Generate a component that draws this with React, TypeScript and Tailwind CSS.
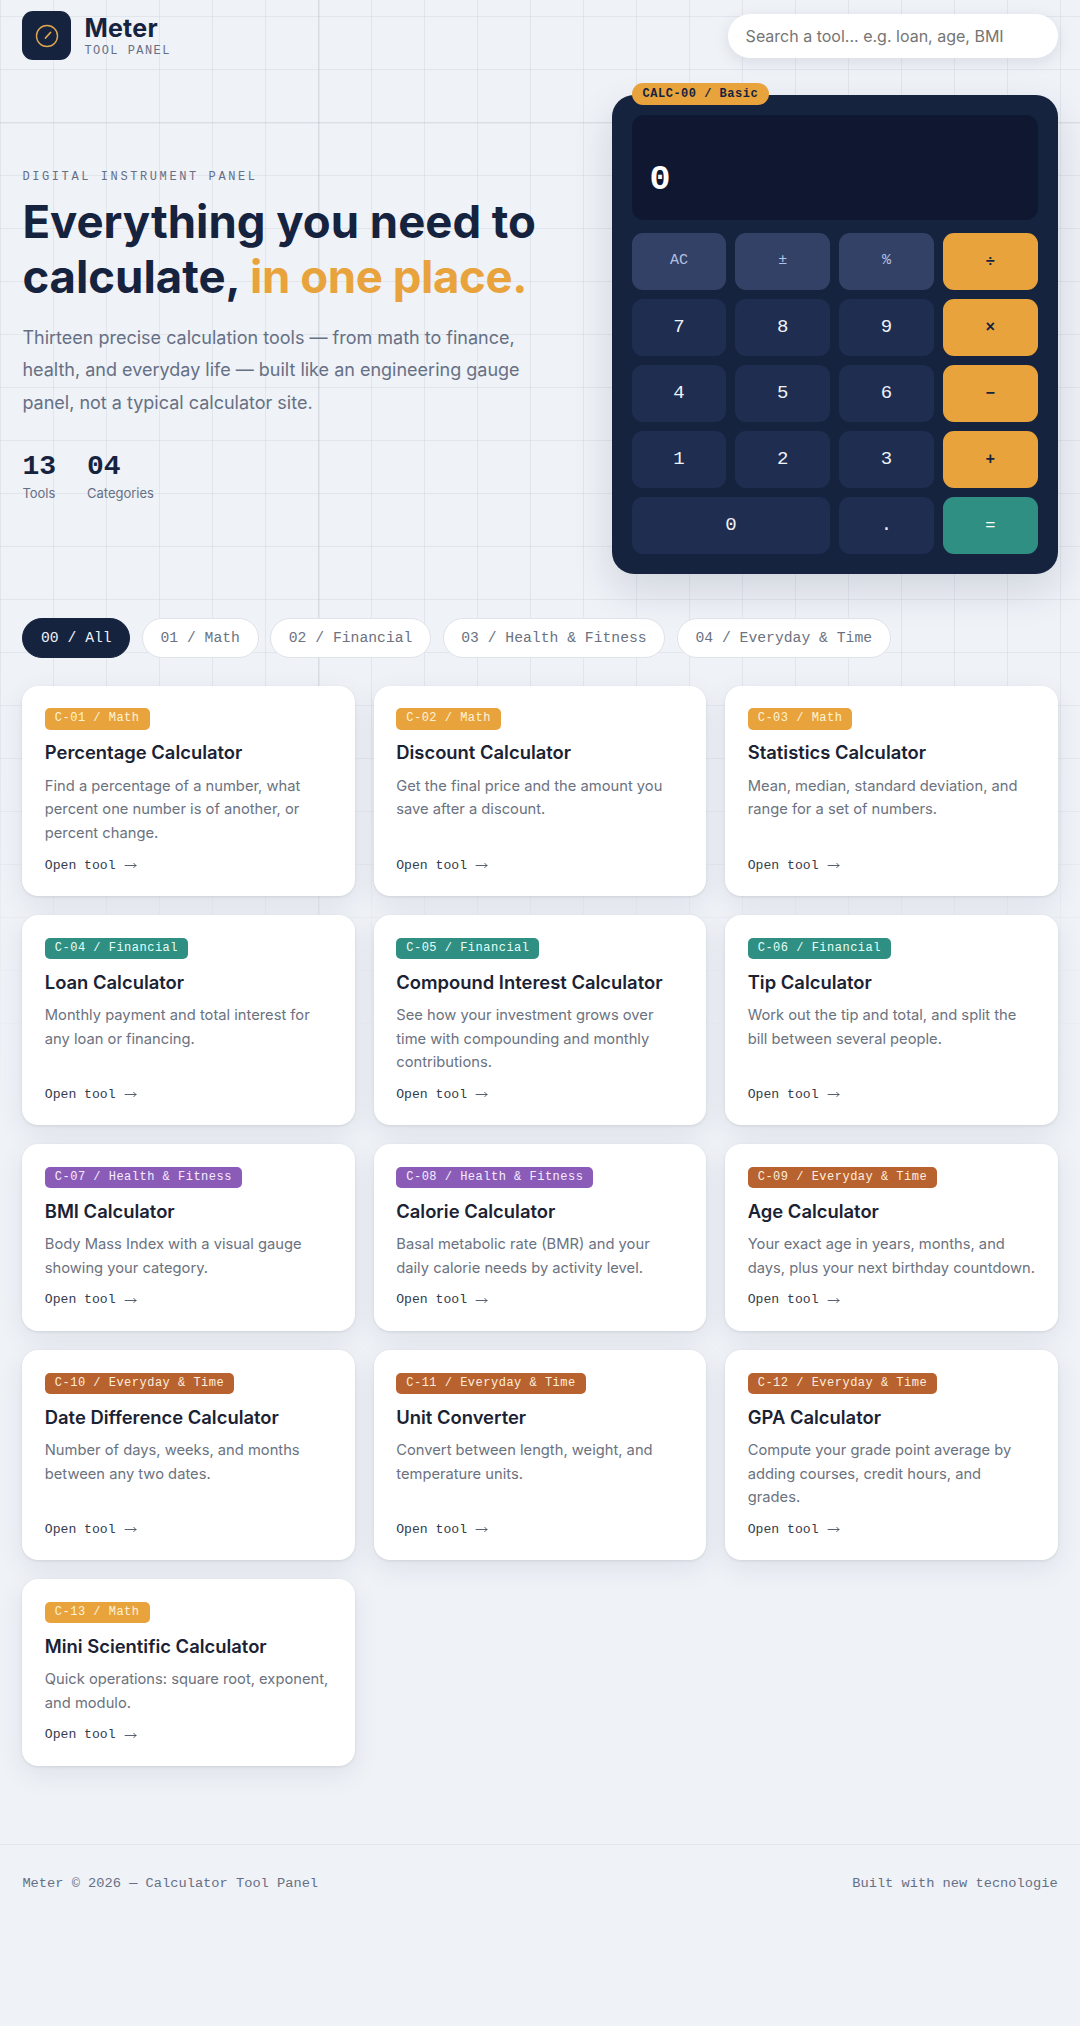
import React from 'react';
import { MoveRight } from 'lucide-react';

const mono = "font-['Liberation_Mono','DejaVu_Sans_Mono',monospace]";

type Tool = { id: string; cat: 'Math' | 'Financial' | 'Health & Fitness' | 'Everyday & Time'; name: string; desc: string };

const tools: Tool[] = [
  { id: 'C-01', cat: 'Math', name: 'Percentage Calculator', desc: 'Find a percentage of a number, what percent one number is of another, or percent change.' },
  { id: 'C-02', cat: 'Math', name: 'Discount Calculator', desc: 'Get the final price and the amount you save after a discount.' },
  { id: 'C-03', cat: 'Math', name: 'Statistics Calculator', desc: 'Mean, median, standard deviation, and range for a set of numbers.' },
  { id: 'C-04', cat: 'Financial', name: 'Loan Calculator', desc: 'Monthly payment and total interest for any loan or financing.' },
  { id: 'C-05', cat: 'Financial', name: 'Compound Interest Calculator', desc: 'See how your investment grows over time with compounding and monthly contributions.' },
  { id: 'C-06', cat: 'Financial', name: 'Tip Calculator', desc: 'Work out the tip and total, and split the bill between several people.' },
  { id: 'C-07', cat: 'Health & Fitness', name: 'BMI Calculator', desc: 'Body Mass Index with a visual gauge showing your category.' },
  { id: 'C-08', cat: 'Health & Fitness', name: 'Calorie Calculator', desc: 'Basal metabolic rate (BMR) and your daily calorie needs by activity level.' },
  { id: 'C-09', cat: 'Everyday & Time', name: 'Age Calculator', desc: 'Your exact age in years, months, and days, plus your next birthday countdown.' },
  { id: 'C-10', cat: 'Everyday & Time', name: 'Date Difference Calculator', desc: 'Number of days, weeks, and months between any two dates.' },
  { id: 'C-11', cat: 'Everyday & Time', name: 'Unit Converter', desc: 'Convert between length, weight, and temperature units.' },
  { id: 'C-12', cat: 'Everyday & Time', name: 'GPA Calculator', desc: 'Compute your grade point average by adding courses, credit hours, and grades.' },
  { id: 'C-13', cat: 'Math', name: 'Mini Scientific Calculator', desc: 'Quick operations: square root, exponent, and modulo.' },
];

const badgeColors: Record<Tool['cat'], string> = {
  Math: 'bg-[#e8a33d] text-[#fff3d6]',
  Financial: 'bg-[#2f8f83] text-[#e6fff8]',
  'Health & Fitness': 'bg-[#8a5cb8] text-[#f6ecff]',
  'Everyday & Time': 'bg-[#b8622f] text-[#ffeedd]',
};

const filters = ['00 / All', '01 / Math', '02 / Financial', '03 / Health & Fitness', '04 / Everyday & Time'];

const keys: { label: string; kind: 'fn' | 'num' | 'op' | 'eq'; wide?: boolean }[] = [
  { label: 'AC', kind: 'fn' }, { label: '±', kind: 'fn' }, { label: '%', kind: 'fn' }, { label: '÷', kind: 'op' },
  { label: '7', kind: 'num' }, { label: '8', kind: 'num' }, { label: '9', kind: 'num' }, { label: '×', kind: 'op' },
  { label: '4', kind: 'num' }, { label: '5', kind: 'num' }, { label: '6', kind: 'num' }, { label: '−', kind: 'op' },
  { label: '1', kind: 'num' }, { label: '2', kind: 'num' }, { label: '3', kind: 'num' }, { label: '+', kind: 'op' },
  { label: '0', kind: 'num', wide: true }, { label: '.', kind: 'num' }, { label: '=', kind: 'eq' },
];

const keyStyles = {
  fn: 'bg-[#334166] text-[#b4c2e6] text-[15px]',
  num: 'bg-[#1f2d50] text-[#eef2f8] text-[19px]',
  op: 'bg-[#e8a33d] text-[#16233f] text-[16px] font-bold',
  eq: 'bg-[#2f8f83] text-white text-[17px]',
};

function Card({ tool }: { tool: Tool }) {
  return (
    <div className="flex flex-col rounded-[16px] bg-white pl-[22.4px] pr-[21px] pt-[22.4px] pb-[20.5px] shadow-[0_1px_3px_rgba(22,35,63,0.1),0_8px_28px_rgba(22,35,63,0.08)]">
      <span className={`${mono} ${badgeColors[tool.cat]} self-start rounded-[5px] px-[10px] h-[21.5px] leading-[21.5px] text-[12px] tracking-[0.5px]`}>
        {tool.id} / {tool.cat}
      </span>
      <h3 className="mt-[8.5px] text-[18.4px] leading-[28px] font-semibold text-[#1a2233]">{tool.name}</h3>
      <p className="mt-[8.5px] mb-[10px] text-[14.72px] leading-[23.55px] text-[#6b7280]">{tool.desc}</p>
      <div className={`${mono} mt-auto flex items-center gap-[8px] text-[13.12px] leading-[20px] text-[#333b4d]`}>
        Open tool <MoveRight size={13} strokeWidth={1.5} />
      </div>
    </div>
  );
}

export default function App() {
  return (
    <div className="relative min-h-[2026px] bg-[#eff2f7] font-['Inter',sans-serif]">
      {/* blueprint grid, fades out below the hero */}
      <div className="pointer-events-none absolute inset-x-0 top-0 h-[1100px] bg-[linear-gradient(90deg,transparent_318px,rgba(26,39,68,0.05)_318px,rgba(26,39,68,0.05)_320px,transparent_320px),linear-gradient(transparent_122px,rgba(26,39,68,0.04)_122px,rgba(26,39,68,0.04)_124px,transparent_124px),linear-gradient(rgba(26,39,68,0.06)_1px,transparent_1px),linear-gradient(90deg,rgba(26,39,68,0.06)_1px,transparent_1px)] bg-[size:100%_100%,100%_100%,53px_53px,53px_53px] bg-[position:0_0,0_0,0_16px,0_16px] [mask-image:linear-gradient(to_bottom,black_60%,transparent_100%)]" />

      <div className="relative">
        <header className="flex items-start justify-between px-[22.4px] pt-[11px]">
          <div className="flex items-center gap-[13px]">
            <div className="flex h-[49px] w-[49px] items-center justify-center rounded-[11px] bg-[#16233f]">
              <svg width="24" height="24" viewBox="0 0 24 24" fill="none" stroke="#e0a650" strokeWidth="1.4" strokeLinecap="round">
                <circle cx="12" cy="12" r="10.5" />
                <path d="M10.5 14l5-5.5" strokeWidth="1.8" />
              </svg>
            </div>
            <div>
              <div className="text-[25px] leading-[30px] font-bold tracking-[0.01em] text-[#16233f]">Meter</div>
              <div className={`${mono} mt-[1px] text-[12px] leading-[15px] tracking-[1.45px] text-[#667085]`}>TOOL PANEL</div>
            </div>
          </div>
          <div className="mt-[3px] flex h-[43.5px] w-[330px] items-center rounded-full bg-white px-[18px] text-[16px] text-[#757575] shadow-[0_4px_16px_rgba(22,35,63,0.1)]">
            Search a tool... e.g. loan, age, BMI
          </div>
        </header>

        <section className="mt-[35px] grid grid-cols-[1fr_446px] gap-[40px] px-[22.4px]">
          <div className="flex flex-col pt-[73px]">
            <div className={`${mono} text-[12px] leading-[18px] tracking-[2.6px] text-[#667085]`}>DIGITAL INSTRUMENT PANEL</div>
            <h1 className="mt-[8px] text-[45.5px] leading-[55px] font-bold text-[#16233f]">
              Everything you need to calculate, <span className="tracking-[-0.4px] text-[#e8a33d]">in one place.</span>
            </h1>
            <p className="mt-[18px] max-w-[530px] text-[18px] leading-[32.4px] text-[#667085]">
              Thirteen precise calculation tools — from math to finance, health, and everyday life — built like an engineering gauge panel, not a typical calculator site.
            </p>
            <div className="mt-[31px] flex gap-[31px]">
              <div>
                <div className={`${mono} text-[28px] leading-[34px] font-bold text-[#16233f]`}>13</div>
                <div className="text-[13px] leading-[18px] text-[#667085]">Tools</div>
              </div>
              <div>
                <div className={`${mono} text-[28px] leading-[34px] font-bold text-[#16233f]`}>04</div>
                <div className="text-[13px] leading-[18px] text-[#667085]">Categories</div>
              </div>
            </div>
          </div>

          <div className="relative rounded-[22px] bg-[#16233f] p-[20px] shadow-[0_16px_40px_rgba(22,35,63,0.14)]">
            <span className={`${mono} absolute -top-[12px] left-[20px] h-[22px] rounded-full bg-[#e8a33d] px-[11px] text-[12px] leading-[22px] font-bold tracking-[0.5px] text-[#16233f]`}>
              CALC-00 / Basic
            </span>
            <div className={`${mono} flex h-[105px] items-end rounded-[12px] bg-[#0f1830] px-[18px] pb-[20px] text-[35px] leading-[40px] font-bold text-white`}>0</div>
            <div className="mt-[13px] grid grid-cols-4 gap-[9px]">
              {keys.map((k) => (
                <div
                  key={k.label}
                  className={`${mono} ${keyStyles[k.kind]} ${k.wide ? 'col-span-2' : ''} flex h-[57px] items-center justify-center rounded-[11px]`}
                >
                  {k.label}
                </div>
              ))}
            </div>
          </div>
        </section>

        <nav className="mt-[44px] flex gap-[11.6px] px-[22.4px]">
          {filters.map((f, i) => (
            <div
              key={f}
              className={`${mono} flex h-[40px] items-center rounded-full border px-[17.6px] text-[14.72px] ${i === 0 ? 'border-[#16233f] bg-[#16233f] text-[#eef2f8]' : 'border-[#dfe3ea] bg-white text-[#6b7280]'}`}
            >
              {f}
            </div>
          ))}
        </nav>

        <main className="mt-[28px] grid grid-cols-3 gap-[19.2px] px-[22.4px]">
          {tools.map((t) => (
            <Card key={t.id} tool={t} />
          ))}
        </main>

        <footer className={`${mono} mt-[78px] flex justify-between border-t border-[#e3e7ee] px-[22.4px] pt-[29px] text-[13.7px] leading-[20px] text-[#667085]`}>
          <span>Meter © 2026 — Calculator Tool Panel</span>
          <span>Built with new tecnologie</span>
        </footer>
      </div>
    </div>
  );
}
